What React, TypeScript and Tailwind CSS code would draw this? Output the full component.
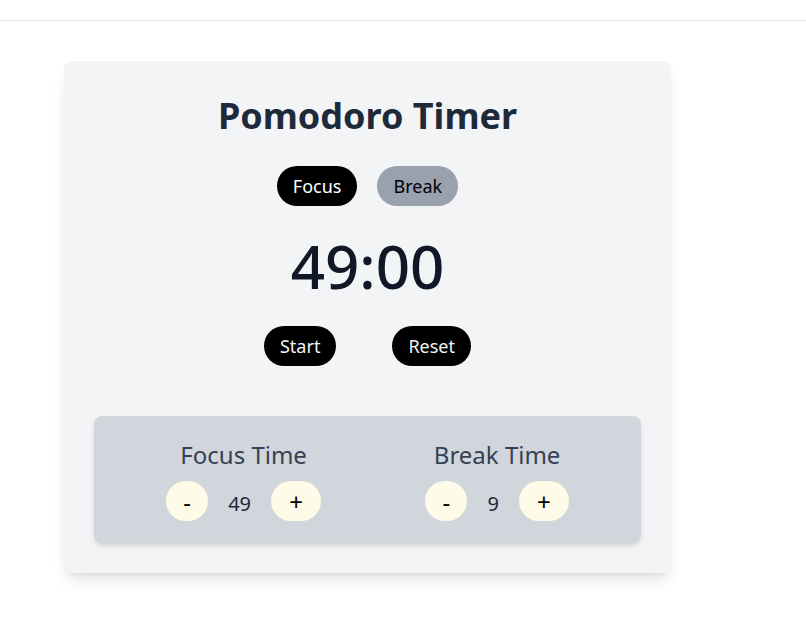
import { useState } from "react";

const FONT = { fontFamily: '"Segoe UI", "Noto Sans", "Open Sans", sans-serif' };

function Stepper({
  label,
  value,
  onChange,
}: {
  label: string;
  value: number;
  onChange: (v: number) => void;
}) {
  return (
    <div className="flex flex-col items-center">
      <h2 className="text-2xl text-gray-700">{label}</h2>
      <div className="mt-2.5 flex items-center gap-5">
        <button
          className="h-10 w-[42px] rounded-full bg-[#fefbe8] pt-0.5 text-2xl text-black"
          onClick={() => onChange(Math.max(1, value - 1))}
        >
          -
        </button>
        <span className="mt-1.5 text-xl text-gray-800">{value}</span>
        <button
          className="h-10 w-[50px] rounded-full bg-[#fefbe8] pt-0.5 text-2xl text-black"
          onClick={() => onChange(value + 1)}
        >
          +
        </button>
      </div>
    </div>
  );
}

export default function App() {
  const [mode, setMode] = useState<"focus" | "break">("focus");
  const [focusMins, setFocusMins] = useState(49);
  const [breakMins, setBreakMins] = useState(9);

  const mins = mode === "focus" ? focusMins : breakMins;
  const display = `${String(mins).padStart(2, "0")}:00`;

  return (
    <div className="min-h-screen bg-white" style={FONT}>
      {/* Top bar */}
      <div className="h-[21px] border-b border-gray-200" />

      <main className="px-16 pt-10">
        <div className="w-[607px] rounded-lg bg-gray-100 p-[30px] shadow-lg">
          <h1 className="mt-[5px] text-center text-4xl font-bold text-gray-800">Pomodoro Timer</h1>

          {/* Mode switch */}
          <div className="mt-[30px] flex justify-center gap-5">
            <button
              className={`rounded-full px-4 py-1.5 text-lg ${
                mode === "focus" ? "bg-black text-white" : "bg-gray-400 text-black"
              }`}
              onClick={() => setMode("focus")}
            >
              Focus
            </button>
            <button
              className={`rounded-full px-4 py-1.5 text-lg ${
                mode === "break" ? "bg-black text-white" : "bg-gray-400 text-black"
              }`}
              onClick={() => setMode("break")}
            >
              Break
            </button>
          </div>

          <div className="my-[30px] text-center text-6xl leading-none font-medium text-gray-900">
            {display}
          </div>

          {/* Controls */}
          <div className="flex justify-center gap-14">
            <button className="rounded-full bg-black px-4 py-1.5 text-lg text-gray-100">Start</button>
            <button className="rounded-full bg-black px-4 py-1.5 text-lg text-gray-100">Reset</button>
          </div>

          {/* Settings */}
          <div className="mt-[50px] flex justify-around rounded-lg bg-gray-300 px-5 pt-[23px] pb-[22px] shadow-md">
            <Stepper label="Focus Time" value={focusMins} onChange={setFocusMins} />
            <Stepper label="Break Time" value={breakMins} onChange={setBreakMins} />
          </div>
        </div>
      </main>
    </div>
  );
}
